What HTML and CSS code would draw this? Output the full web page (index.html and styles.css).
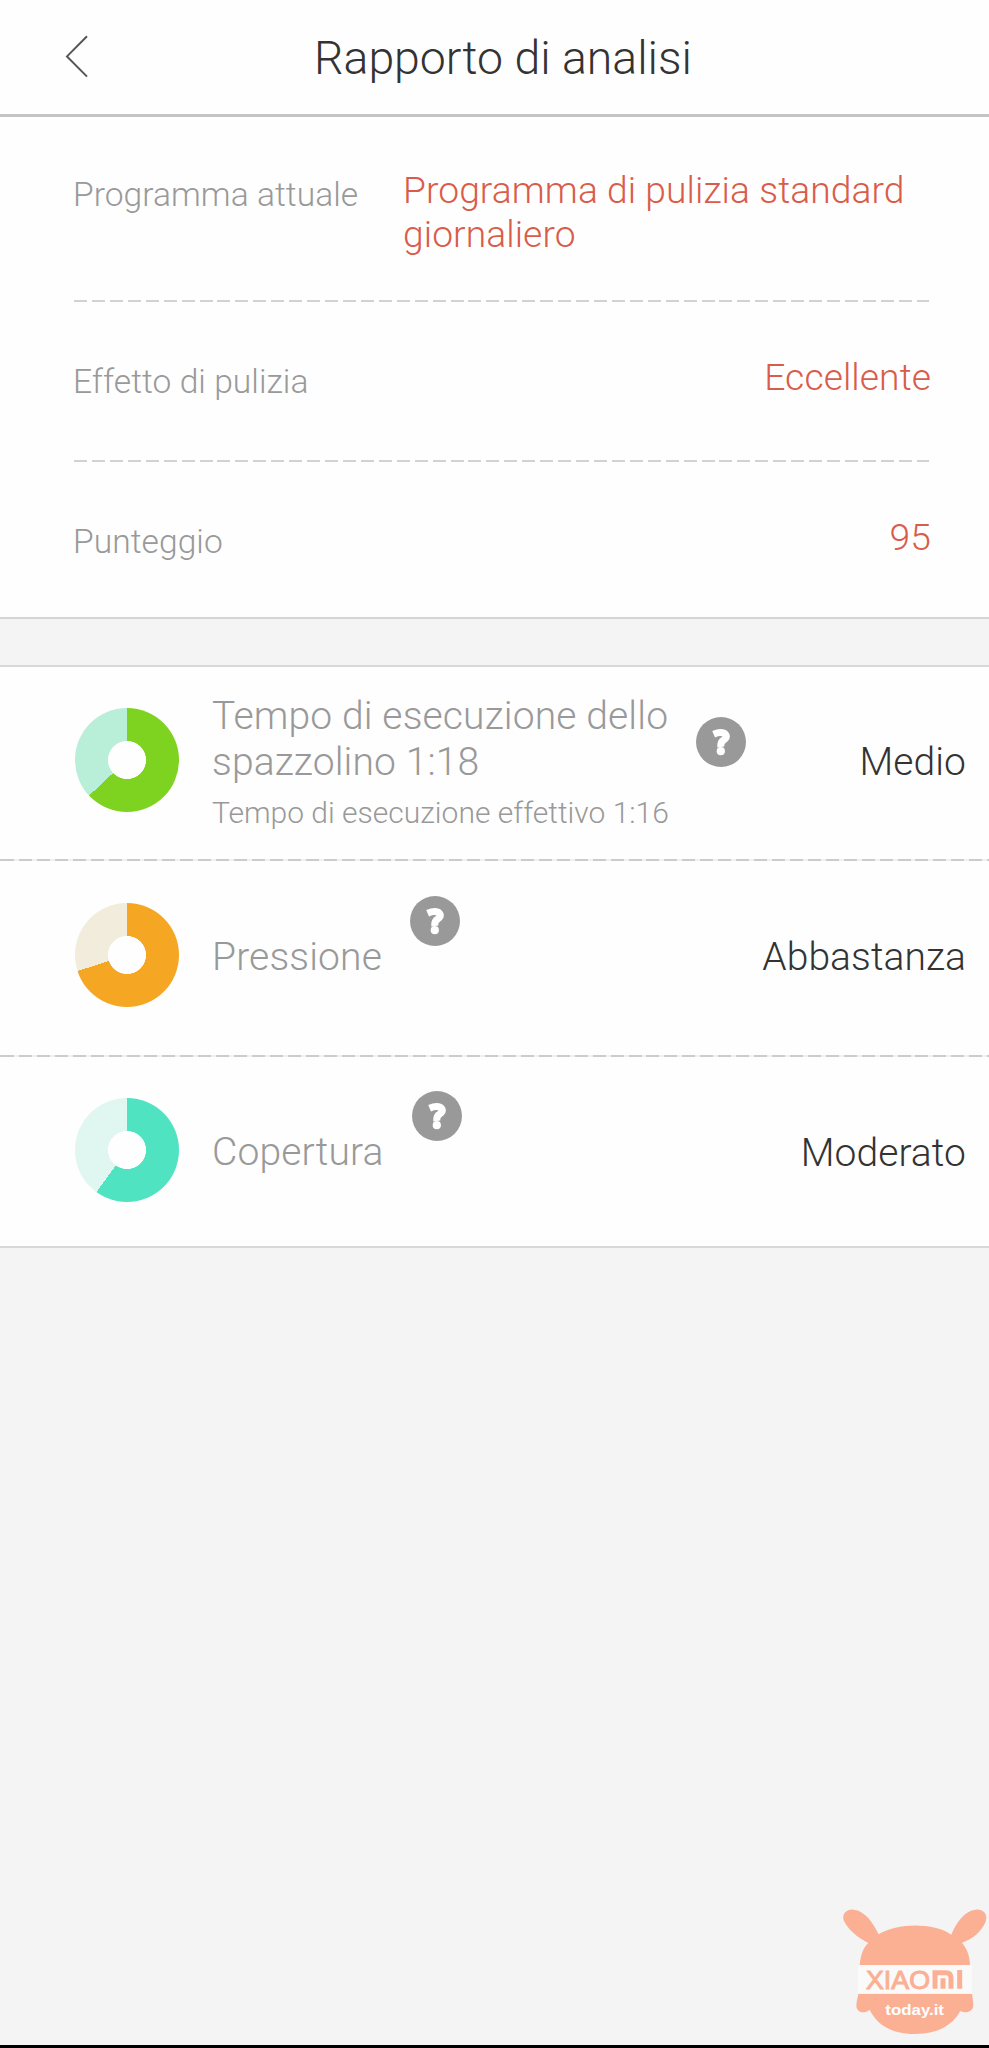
FILE: index.html
```html
<!DOCTYPE html>
<html lang="it">
<head>
<meta charset="utf-8">
<title>Rapporto di analisi</title>
<link rel="stylesheet" href="styles.css">
</head>
<body>
<div class="screen">
  <header class="header">
    <svg class="back" viewBox="0 0 26 46" aria-label="Indietro"><path d="M23 3.2 L3 23.4 L23 43.6"/></svg>
    <h1 class="title">Rapporto di analisi</h1>
  </header>

  <section class="summary">
    <div class="fact fact-tall">
      <span class="label">Programma attuale</span>
      <span class="value">Programma di pulizia standard giornaliero</span>
    </div>
    <div class="dash"></div>
    <div class="fact">
      <span class="label">Effetto di pulizia</span>
      <span class="value">Eccellente</span>
    </div>
    <div class="dash"></div>
    <div class="fact">
      <span class="label">Punteggio</span>
      <span class="value">95</span>
    </div>
  </section>

  <section class="metrics">
    <div class="metric metric-first">
      <div class="donut donut-time"></div>
      <div class="info">
        <div class="name">Tempo di esecuzione dello<br>spazzolino 1:18</div>
        <div class="sub">Tempo di esecuzione effettivo 1:16</div>
      </div>
      <svg class="help help-time" viewBox="0 0 50 50"><circle cx="25" cy="25" r="25"/><path d="M17.6 17.2 Q24 14.4 28.2 16.2 Q32.6 19.4 28 22.8 Q24.2 24.8 24.8 30"/><circle class="dot" cx="24.8" cy="34.2" r="4.1"/></svg>
      <div class="rating">Medio</div>
    </div>
    <div class="dash dash-wide"></div>
    <div class="metric">
      <div class="donut donut-pressure"></div>
      <div class="info"><div class="name">Pressione</div></div>
      <svg class="help" viewBox="0 0 50 50"><circle cx="25" cy="25" r="25"/><path d="M17.6 17.2 Q24 14.4 28.2 16.2 Q32.6 19.4 28 22.8 Q24.2 24.8 24.8 30"/><circle class="dot" cx="24.8" cy="34.2" r="4.1"/></svg>
      <div class="rating">Abbastanza</div>
    </div>
    <div class="dash dash-wide"></div>
    <div class="metric">
      <div class="donut donut-coverage"></div>
      <div class="info"><div class="name">Copertura</div></div>
      <svg class="help" viewBox="0 0 50 50"><circle cx="25" cy="25" r="25"/><path d="M17.6 17.2 Q24 14.4 28.2 16.2 Q32.6 19.4 28 22.8 Q24.2 24.8 24.8 30"/><circle class="dot" cx="24.8" cy="34.2" r="4.1"/></svg>
      <div class="rating">Moderato</div>
    </div>
  </section>

  <svg class="watermark" viewBox="0 0 480 474">
    <g class="wm-fill">
      <path d="M92 225 C96 190 104 172 118 159 C84 142 56 118 44 91 C38 70 54 57 74 59 C108 62 132 98 149 133 C205 98 315 98 367 134 C382 96 408 62 440 59 C462 57 478 72 470 95 C458 124 432 146 399 158 C414 176 422 196 423 225 Z"/>
      <path d="M88 311 H429 C431 324 433 337 433 347 C432 364 412 372 394 363 C370 408 322 432 258 432 C194 432 146 408 122 359 C104 374 82 366 82 347 C82 335 86 324 88 311 Z"/>
    </g>
    <rect class="wm-band" x="86" y="226" width="343" height="85"/>
    <text class="wm-brand" x="111" y="296" textLength="192" lengthAdjust="spacingAndGlyphs">XIAO</text>
    <path class="wm-mi" d="M318 296 V248 H351 Q366 248 366 263 V296 M342 265 V296 M392 240 V296"/>
    <text class="wm-site" x="169" y="374" textLength="176" lengthAdjust="spacingAndGlyphs">today.it</text>
  </svg>
  <div class="bottom-bar"></div>
</div>
</body>
</html>
```

FILE: styles.css
```css
* { box-sizing: border-box; }

body {
  margin: 0;
  background: #f4f4f4;
  font-family: Roboto, "Liberation Sans", sans-serif;
  font-weight: 300;
}

.screen {
  position: relative;
  display: flex;
  flex-direction: column;
  width: 989px;
  height: 2048px;
}

.header {
  display: grid;
  grid-template-columns: 92px 1fr 75px;
  align-items: center;
  height: 117px;
  background: #fefefe;
  border-bottom: 3px solid #c4c4c4;
}

.back {
  width: 26px;
  height: 46px;
  margin: 0 0 3px 64px;
  fill: none;
  stroke: #555;
  stroke-width: 2;
}

.title {
  margin: 0;
  padding-top: 1px;
  text-align: center;
  font-size: 46.4px;
  font-weight: 300;
  line-height: 56px;
  color: #333;
}

.summary {
  height: 502px;
  padding: 0 58px 0 73px;
  background: #fefefe;
  border-bottom: 2px solid #d4d4d4;
}

.fact {
  display: flex;
  justify-content: space-between;
  height: 158px;
  padding-top: 53px;
}

.fact-tall { height: 183px; padding-top: 51px; }

.label {
  padding-top: 5px;
  font-size: 33.6px;
  line-height: 44px;
  letter-spacing: 0.04px;
  white-space: nowrap;
  color: #999;
}

.value {
  font-size: 37.2px;
  line-height: 44px;
  letter-spacing: 0.08px;
  color: #d95c4a;
}

.fact-tall .value { width: 528px; }

.dash {
  height: 2px;
  margin: 0 2px 0 1px;
  background: repeating-linear-gradient(90deg, #d2d2d2 0 13px, transparent 13px 17.93px);
}

.metrics {
  height: 583px;
  margin-top: 46px;
  background: #fefefe;
  border-top: 2px solid #d8d8d8;
  border-bottom: 2px solid #d8d8d8;
}

.dash-wide {
  height: 2px;
  margin: 0;
  background: repeating-linear-gradient(90deg, #ccc 0 13px, #f0f0f0 13px 17.93px) 1px 0;
}

.metric {
  display: flex;
  align-items: center;
  height: 193.5px;
  padding: 0 23px 6px 75px;
}

.metric-first { height: 192px; padding-bottom: 7px; }

.donut {
  width: 104px;
  height: 104px;
  flex: none;
  border-radius: 50%;
}

.donut-time { background: radial-gradient(circle, #fefefe 18.7px, transparent 19.3px), conic-gradient(#7ed321 63%, #b9eed8 63%); }
.donut-pressure { background: radial-gradient(circle, #fefefe 18.7px, transparent 19.3px), conic-gradient(#f5a623 70%, #f1ecdb 70%); }
.donut-coverage { background: radial-gradient(circle, #fefefe 18.7px, transparent 19.3px), conic-gradient(#50e3c2 60%, #e0f7f1 60%); }

.info {
  margin-left: 33px;
  padding-top: 6px;
  white-space: nowrap;
  color: #999;
}

.name {
  font-size: 39px;
  line-height: 45.6px;
  letter-spacing: 0.14px;
}

.sub {
  margin-top: 9.6px;
  font-size: 30px;
  line-height: 36px;
}

.help {
  width: 50px;
  height: 50px;
  flex: none;
  margin: 0 0 68px 28.5px;
  fill: #999;
}

.help-time { margin-bottom: 35.6px; margin-left: 27px; }

.help path {
  fill: none;
  stroke: #fff;
  stroke-width: 7;
}

.help .dot { fill: #fff; }

.rating {
  margin-left: auto;
  padding-top: 5px;
  font-size: 39px;
  line-height: 46px;
  letter-spacing: 0.06px;
  color: #333;
}

.watermark {
  position: absolute;
  right: 0;
  bottom: 0;
  width: 160px;
  height: 158px;
  font-family: "Liberation Sans", Arial, sans-serif;
}

.wm-fill { fill: #fbb094; }
.wm-band { fill: #fafafa; }
.wm-brand { font-size: 79px; font-weight: 400; fill: #fbb094; stroke: #fbb094; stroke-width: 3; }
.wm-mi { fill: none; stroke: #fbb094; stroke-width: 15; }
.wm-site { font-size: 46px; font-weight: 700; fill: #fff; }

.bottom-bar {
  height: 3px;
  margin-top: auto;
  background: #000;
}
```
